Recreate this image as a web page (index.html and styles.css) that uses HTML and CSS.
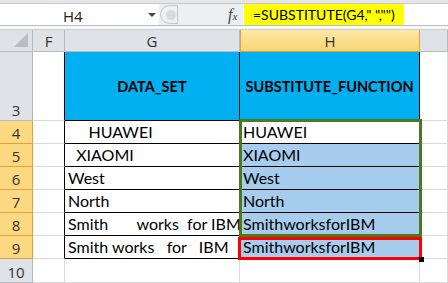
FILE: index.html
```html
<!DOCTYPE html>
<html lang="en">
<head>
    <meta charset="UTF-8">
    <title>SUBSTITUTE</title>
    <link rel="stylesheet" href="styles.css">
</head>
<body>

<div class="toolbar">
    <div class="namebox">
        <span class="cellref">H4</span>
        <span class="arrow"></span>
    </div>
    <div class="grip"><span class="knob"></span></div>
    <div class="fx">f<small>x</small></div>
    <div class="formula"><span class="hl">=SUBSTITUTE(G4," ","")</span></div>
</div>
<div class="strip"></div>

<div class="sheet">
    <!-- column headers -->
    <div class="corner"><span class="tri"></span></div>
    <div class="colhead">F</div>
    <div class="colhead">G</div>
    <div class="colhead sel">H</div>
    <div class="colhead"></div>

    <!-- row 3 -->
    <div class="rowhead tall">3</div>
    <div class="cell edge"></div>
    <div class="cell head">DATA_SET</div>
    <div class="cell head">SUBSTITUTE_FUNCTION</div>
    <div class="cell"></div>

    <div class="rowhead sel">4</div>
    <div class="cell edge"></div>
    <div class="cell data">     HUAWEI</div>
    <div class="cell data">HUAWEI</div>
    <div class="cell"></div>

    <div class="rowhead sel">5</div>
    <div class="cell edge"></div>
    <div class="cell data">  XIAOMI</div>
    <div class="cell data fill">XIAOMI</div>
    <div class="cell"></div>

    <div class="rowhead sel">6</div>
    <div class="cell edge"></div>
    <div class="cell data">West</div>
    <div class="cell data fill">West</div>
    <div class="cell"></div>

    <div class="rowhead sel">7</div>
    <div class="cell edge"></div>
    <div class="cell data">North</div>
    <div class="cell data fill">North</div>
    <div class="cell"></div>

    <div class="rowhead sel">8</div>
    <div class="cell edge"></div>
    <div class="cell data">Smith       works  for IBM</div>
    <div class="cell data fill">SmithworksforIBM</div>
    <div class="cell"></div>

    <div class="rowhead sel">9</div>
    <div class="cell edge"></div>
    <div class="cell data">Smith works   for   IBM</div>
    <div class="cell data fill">SmithworksforIBM</div>
    <div class="cell"></div>

    <div class="rowhead">10</div>
    <div class="cell"></div>
    <div class="cell"></div>
    <div class="cell"></div>
    <div class="cell"></div>

    <div class="range-box"></div>
    <div class="active-box"></div>
    <div class="handle"></div>
</div>

</body>
</html>
```

FILE: styles.css
```css
* {
    margin: 0;
    padding: 0;
    box-sizing: border-box;
}

body {
    width: 448px;
    height: 283px;
    overflow: hidden;
    background: #ffffff;
    font-family: 'Lato', 'Liberation Sans', sans-serif;
}

/* formula bar */
.toolbar {
    display: flex;
    height: 26px;
    background: #eceef1;
    border-top: 3px solid #e4e6ea;
    border-bottom: 1px solid #b9bcc0;
}

.namebox {
    position: relative;
    width: 159px;
    background: #ffffff;
    border-top: 1px solid #c4c7cb;
}

.cellref {
    position: absolute;
    left: 63px;
    top: 2px;
    font: 15px 'Open Sans', sans-serif;
    color: #222;
}

.arrow {
    position: absolute;
    left: 148px;
    top: 9px;
    border-left: 4px solid transparent;
    border-right: 4px solid transparent;
    border-top: 4px solid #444;
}

.grip {
    width: 64px;
    display: flex;
    align-items: center;
    border-top: 1px solid #c4c7cb;
}

.knob {
    width: 18px;
    height: 19px;
    margin-left: 1px;
    border: 1px solid #c3c6ca;
    border-radius: 10px 0 0 10px;
    background: radial-gradient(circle at 10px 9px, #d7d9dc 0, #d7d9dc 4px, #eef0f2 6px);
}

.fx {
    width: 20px;
    font: italic 16px 'Liberation Serif', serif;
    color: #444;
    line-height: 21px;
    padding-left: 5px;
    border-top: 1px solid #c4c7cb;
}

.fx small {
    font-size: 11px;
}

.formula {
    flex: 1;
    background: #ffffff;
    padding-left: 1px;
    border-top: 1px solid #c4c7cb;
}

.hl {
    display: inline-block;
    height: 21px;
    padding: 0 9px 0 9px;
    background: #ffff00;
    font-size: 14px;
    line-height: 21px;
    color: #000;
}

.strip {
    height: 4px;
    background: #f7f8f9;
    border-bottom: 1px solid #c9ccd0;
}

/* sheet grid */
.sheet {
    position: relative;
    display: grid;
    grid-template-columns: 33px 32px 175px 180px 28px;
    grid-template-rows: 22px 69px repeat(6, 23px) 24px;
}

.corner {
    position: relative;
    background: #dfe2e6;
    border-right: 1px solid #b7bbc0;
    border-bottom: 1px solid #b7bbc0;
}

.tri {
    position: absolute;
    right: 4px;
    bottom: 4px;
    border-left: 14px solid transparent;
    border-bottom: 14px solid #b9bcc0;
}

.colhead {
    display: flex;
    align-items: center;
    justify-content: center;
    background: #dfe2e6;
    border-right: 1px solid #b7bbc0;
    border-bottom: 1px solid #b7bbc0;
    font: 15px 'Open Sans', sans-serif;
    color: #333;
}

.colhead.sel {
    background: linear-gradient(#fde9a9, #f9d472);
    border: 1px solid #e0a140;
    border-top: 0;
}

.rowhead {
    display: flex;
    align-items: flex-end;
    justify-content: center;
    background: #dfe2e6;
    border-right: 1px solid #b7bbc0;
    border-bottom: 1px solid #b7bbc0;
    font: 15px 'Open Sans', sans-serif;
    color: #333;
}

.rowhead.sel {
    background: #fcd880;
    border-right: 1px solid #e0a140;
    border-bottom: 1px solid #e0a140;
}

.cell {
    border-right: 1px solid #d9d9d9;
    border-bottom: 1px solid #d9d9d9;
}

.cell.edge {
    border-right: 1px solid #000;
}

.head {
    display: flex;
    align-items: center;
    justify-content: center;
    background: #00b0f0;
    border-right: 1px solid #000;
    border-bottom: 1px solid #000;
    font-size: 14.5px;
    font-weight: bold;
    color: #000;
}

.data {
    display: flex;
    align-items: flex-end;
    overflow: hidden;
    padding: 0 0 2px 3px;
    border-right: 1px solid #000;
    border-bottom: 1px solid #000;
    font-size: 16px;
    color: #000;
    white-space: pre;
}

.fill {
    background: #a7cdee;
}

/* selection overlays */
.range-box {
    position: absolute;
    left: 239px;
    top: 89px;
    width: 183px;
    height: 118px;
    border: 3px solid #4a7a1f;
}

.active-box {
    position: absolute;
    left: 238px;
    top: 207px;
    width: 184px;
    height: 23px;
    border: 3px solid #ff0000;
}

.handle {
    position: absolute;
    left: 419px;
    top: 227px;
    width: 5px;
    height: 5px;
    background: #000;
}
```
